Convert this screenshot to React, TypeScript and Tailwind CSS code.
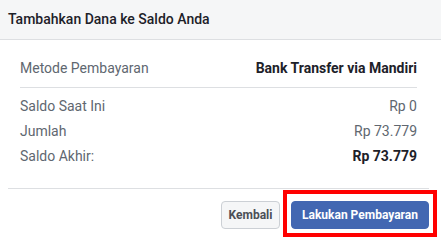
import React from 'react';

const rows = [
  { label: 'Saldo Saat Ini', value: 'Rp 0', bold: false },
  { label: 'Jumlah', value: 'Rp 73.779', bold: false },
  { label: 'Saldo Akhir:', value: 'Rp 73.779', bold: true },
];

const App = () => {
  return (
    <div className="w-[441px] h-[240px] bg-white overflow-hidden font-['Roboto',sans-serif]">
      <div className="h-[40px] bg-[#f5f6f7] border-b border-[#dddfe2] px-2 flex items-center text-[14px] font-medium text-[#1d2129]">
        Tambahkan Dana ke Saldo Anda
      </div>
      <div className="pl-5 pr-[24px] pt-4">
        <div className="h-6 flex items-center justify-between text-[14px]">
          <span className="text-[#606770]">Metode Pembayaran</span>
          <span className="font-bold text-[#1d2129]">Bank Transfer via Mandiri</span>
        </div>
        <div className="mt-[7px] border-t border-[#dddfe2] pt-[6px]">
          {rows.map((r) => (
            <div key={r.label} className="h-[25px] flex items-center justify-between text-[14px]">
              <span className="text-[#606770]">{r.label}</span>
              <span className={r.bold ? 'font-bold text-[#1d2129]' : 'text-[#606770]'}>{r.value}</span>
            </div>
          ))}
        </div>
      </div>
      <div className="ml-2 mr-3 mt-[19px] border-t border-[#dddfe2] pt-3 flex justify-end items-center gap-[11px]">
        <button className="h-7 w-[59px] rounded-sm border border-[#ccd0d5] bg-[#f5f6f7] text-[12px] font-bold text-[#4b4f56]">
          Kembali
        </button>
        <div className="relative">
          <button className="h-7 w-[138px] rounded-sm border border-[#4267b2] bg-[#4267b2] text-[12px] font-bold text-white">
            Lakukan Pembayaran
          </button>
          <div className="absolute -left-2 -right-2 -top-[11px] -bottom-[8px] border-4 border-[#ff0000] pointer-events-none" />
        </div>
      </div>
    </div>
  );
};

export default App;
